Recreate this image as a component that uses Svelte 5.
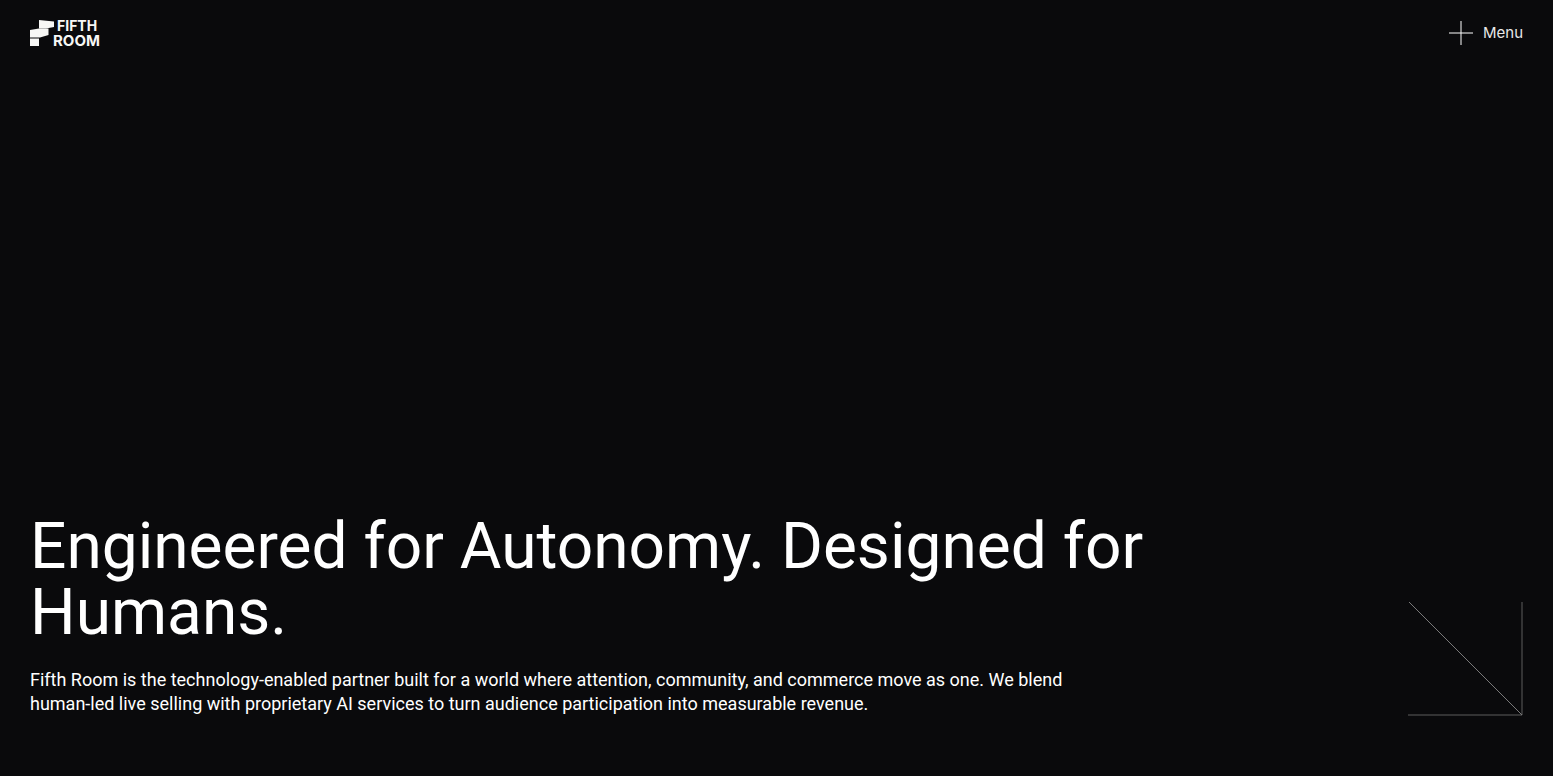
<script>
  const title = 'Engineered for Autonomy. Designed for Humans.';
  const intro =
    'Fifth Room is the technology-enabled partner built for a world where attention, community, and commerce move as one. We blend human-led live selling with proprietary AI services to turn audience participation into measurable revenue.';

  let menuOpen = $state(false);
</script>

<div class="page">
  <header class="header">
    <a class="logo" href="/" aria-label="Fifth Room">
      <svg class="logo-mark" viewBox="0 0 24 26" aria-hidden="true">
        <path d="M9 0L24 1.5V7L16 8.5H9Z" />
        <path d="M0 10L9 8.5H18.5V15L10 17.5H0Z" />
        <path d="M0 18.5H9V26H0Z" />
      </svg>
      <svg class="logo-name" viewBox="0 0 48 26" aria-hidden="true">
        <text class="small" x="2" y="11">FIFTH</text>
        <text x="-2" y="26">ROOM</text>
      </svg>
    </a>

    <button class="menu" aria-expanded={menuOpen} onclick={() => (menuOpen = !menuOpen)}>
      <svg class="plus" viewBox="0 0 24 24" aria-hidden="true">
        <path d="M12 0V24M0 12H24" />
      </svg>
      <span>Menu</span>
    </button>
  </header>

  <main class="hero">
    <div class="copy">
      <h1>{title}</h1>
      <p>{intro}</p>
    </div>
    <svg class="arrow" viewBox="0 0 115 115" aria-hidden="true">
      <path d="M114 1V114H0" />
      <path class="diagonal" d="M1 1L114 114" />
    </svg>
  </main>
</div>

<style>
  :global(body) {
    margin: 0;
    background: #0a0a0c;
  }
  .page {
    display: flex;
    flex-direction: column;
    box-sizing: border-box;
    min-height: 100vh;
    color: #fff;
    background: #0a0a0c;
    font-family: Roboto, 'Liberation Sans', sans-serif;
  }
  .header {
    display: flex;
    align-items: center;
    justify-content: space-between;
    padding: 20px 30px;
  }
  .logo {
    display: flex;
    gap: 1px;
    color: #fff;
    text-decoration: none;
  }
  .logo-mark {
    width: 24px;
    height: 26px;
    fill: #f7f7f5;
  }
  .logo-name {
    width: 48px;
    height: 26px;
    overflow: visible;
    fill: #f7f7f5;
    font-family: Inter, sans-serif;
    font-size: 15px;
    font-weight: 700;
  }
  .logo-name .small {
    font-size: 14px;
  }
  .menu {
    display: flex;
    align-items: center;
    gap: 10px;
    padding: 0;
    border: 0;
    background: none;
    color: #e8e8e8;
    font-family: Inter, sans-serif;
    font-size: 15px;
    line-height: 24px;
    cursor: pointer;
  }
  .plus {
    width: 24px;
    height: 24px;
    fill: none;
    stroke: #fff;
  }
  .hero {
    display: flex;
    flex: 1;
    align-items: flex-end;
    justify-content: space-between;
    gap: 30px;
    padding: 0 30px 60px;
  }
  .copy {
    max-width: 1140px;
  }
  h1 {
    margin: 0 0 22px;
    font-size: 64px;
    font-weight: 400;
    line-height: 66px;
  }
  p {
    max-width: 1070px;
    margin: 0;
    font-size: 18px;
    line-height: 24px;
  }
  .arrow {
    flex: none;
    width: 115px;
    height: 115px;
    fill: none;
    stroke: #5c5c5c;
  }
  .diagonal {
    stroke: #7a7a7a;
  }
</style>
